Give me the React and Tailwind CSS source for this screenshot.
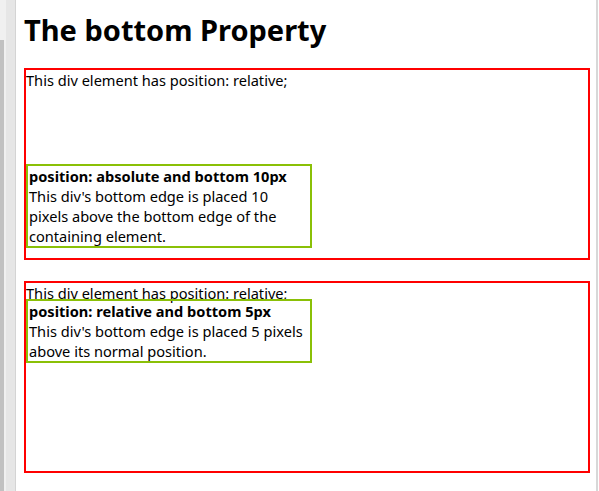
import React from 'react';

const font = { fontFamily: '"Noto Sans", "Noto Sans CJK KR", sans-serif' };

const App = () => {
  return (
    <div className="flex min-h-[491px] bg-white text-black" style={font}>
      {/* left window chrome */}
      <div className="flex w-4 shrink-0">
        <div className="flex w-1 flex-col">
          <div className="h-10 bg-[#f0f0f0]"></div>
          <div className="flex-1 bg-[#c1c1c1]"></div>
        </div>
        <div className="w-[2px] bg-[#f0f0f0]"></div>
        <div className="w-[9px] bg-[#e6e6e6]"></div>
        <div className="w-px bg-[#d4d4d4]"></div>
      </div>

      <div className="flex-1 pl-2 pr-[6px]">
        <h1 className="mt-[10px] mb-[18px] text-[29px] font-bold leading-[40px]">The bottom Property</h1>

        <div className="relative h-[192px] border-2 border-[#ff0000] text-[14.6px] leading-[20px]">
          <p>This div element has position: relative;</p>
          <div className="absolute bottom-[10px] left-0 w-[286px] border-2 border-[#8ac007] pl-px">
            <p className="font-bold">position: absolute and bottom 10px</p>
            <p>This div's bottom edge is placed 10 pixels above the bottom edge of the containing element.</p>
          </div>
        </div>

        <div className="mt-[21px] h-[192px] border-2 border-[#ff0000] text-[14.6px] leading-[20px]">
          <p>This div element has position: relative;</p>
          <div className="relative bottom-[4px] w-[286px] border-2 border-[#8ac007] pl-px">
            <p className="font-bold">position: relative and bottom 5px</p>
            <p>This div's bottom edge is placed 5 pixels above its normal position.</p>
          </div>
        </div>
      </div>

      <div className="w-[2px] shrink-0 bg-[#d8d8d8]"></div>
      <div className="w-px shrink-0 bg-white"></div>
    </div>
  );
};

export default App;
